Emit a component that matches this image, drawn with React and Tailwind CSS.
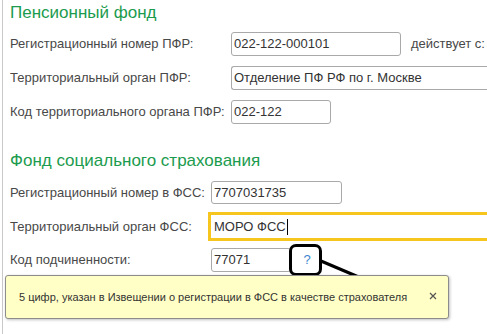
import React from "react";

function Label({ children, w }) {
  return (
    <div className={`shrink-0 text-[13px] leading-4 text-[#484848] ${w}`}>{children}</div>
  );
}

export default function App() {
  return (
    <div className="relative w-[487px] h-[334px] overflow-hidden bg-white font-['Liberation_Sans',Arial,sans-serif]">
      <div className="ml-[2px] h-full border-l border-[#c8c8c8] pl-[7px] pt-[3px]">
        <div className="h-5 text-[17px] leading-5 text-[#1b9b4e] whitespace-nowrap">Пенсионный фонд</div>

        <div className="mt-[9px] flex h-6 items-center whitespace-nowrap">
          <Label w="w-[221px]">Регистрационный номер ПФР:</Label>
          <div className="flex h-full w-[170px] shrink-0 items-center rounded-[3px] border border-[#a9a9a9] px-[2px] text-[13px] text-[#333]">022-122-000101</div>
          <div className="ml-[10px] text-[13px] text-[#484848]">действует с:</div>
        </div>

        <div className="mt-[10px] flex h-6 items-center whitespace-nowrap">
          <Label w="w-[221px]">Территориальный орган ПФР:</Label>
          <div className="flex h-full w-[300px] shrink-0 items-center rounded-l-[3px] border border-r-0 border-[#a9a9a9] px-[2px] text-[13px] text-[#333]">Отделение ПФ РФ по г. Москве</div>
        </div>

        <div className="mt-[10px] flex h-6 items-center whitespace-nowrap">
          <Label w="w-[221px]">Код территориального органа ПФР:</Label>
          <div className="flex h-full w-[100px] shrink-0 items-center rounded-[3px] border border-[#a9a9a9] px-[2px] text-[13px] text-[#333]">022-122</div>
        </div>

        <div className="mt-[27px] h-5 text-[17px] leading-5 text-[#1b9b4e] whitespace-nowrap">Фонд социального страхования</div>

        <div className="mt-[10px] flex h-[23px] items-center whitespace-nowrap">
          <Label w="w-[201px]">Регистрационный номер в ФСС:</Label>
          <div className="flex h-full w-[131px] shrink-0 items-center rounded-[3px] border border-[#a9a9a9] px-[2px] text-[13px] text-[#333]">7707031735</div>
        </div>

        <div className="mt-[8px] flex h-[29px] items-center whitespace-nowrap">
          <Label w="w-[198px]">Территориальный орган ФСС:</Label>
          <div className="flex h-full w-[340px] shrink-0 items-center border-[3px] border-r-0 border-[#f7c61e] px-[3px] text-[13px] text-[#333]">
            МОРО ФСС<span className="ml-px inline-block h-[16px] w-px bg-black" />
          </div>
        </div>

        <div className="mt-[7px] flex h-6 items-center whitespace-nowrap">
          <Label w="w-[201px]">Код подчиненности:</Label>
          <div className="flex h-full w-[80px] shrink-0 items-center rounded-[3px] border border-[#a9a9a9] px-[2px] text-[13px] text-[#333]">77071</div>
          <div className="flex w-[32px] justify-center text-[13px] text-[#3a86cf]">?</div>
        </div>
      </div>

      {/* annotation frame around help button */}
      <div className="absolute left-[289px] top-[244px] h-[32px] w-[33px] rounded-[7px] border-[3px] border-black" />
      <svg className="absolute left-0 top-0" width="487" height="334" viewBox="0 0 487 334">
        <line x1="321" y1="261" x2="361" y2="278" stroke="black" strokeWidth="3" />
      </svg>

      {/* tooltip */}
      <div className="absolute left-[5px] top-[275px] flex h-[44px] w-[444px] items-center justify-between rounded-[3px] border border-[#8c8c8c] bg-[#ffffc6] pl-[13px] pr-[11px] shadow-[1px_1px_3px_rgba(0,0,0,0.25)] whitespace-nowrap">
        <span className="text-[11px] text-[#333]">5 цифр, указан в Извещении о регистрации в ФСС в качестве страхователя</span>
        <svg width="8" height="8" viewBox="0 0 8 8" className="mb-[2px]">
          <path d="M1 1 L7 7 M7 1 L1 7" stroke="#555" strokeWidth="1.2" />
        </svg>
      </div>
    </div>
  );
}
